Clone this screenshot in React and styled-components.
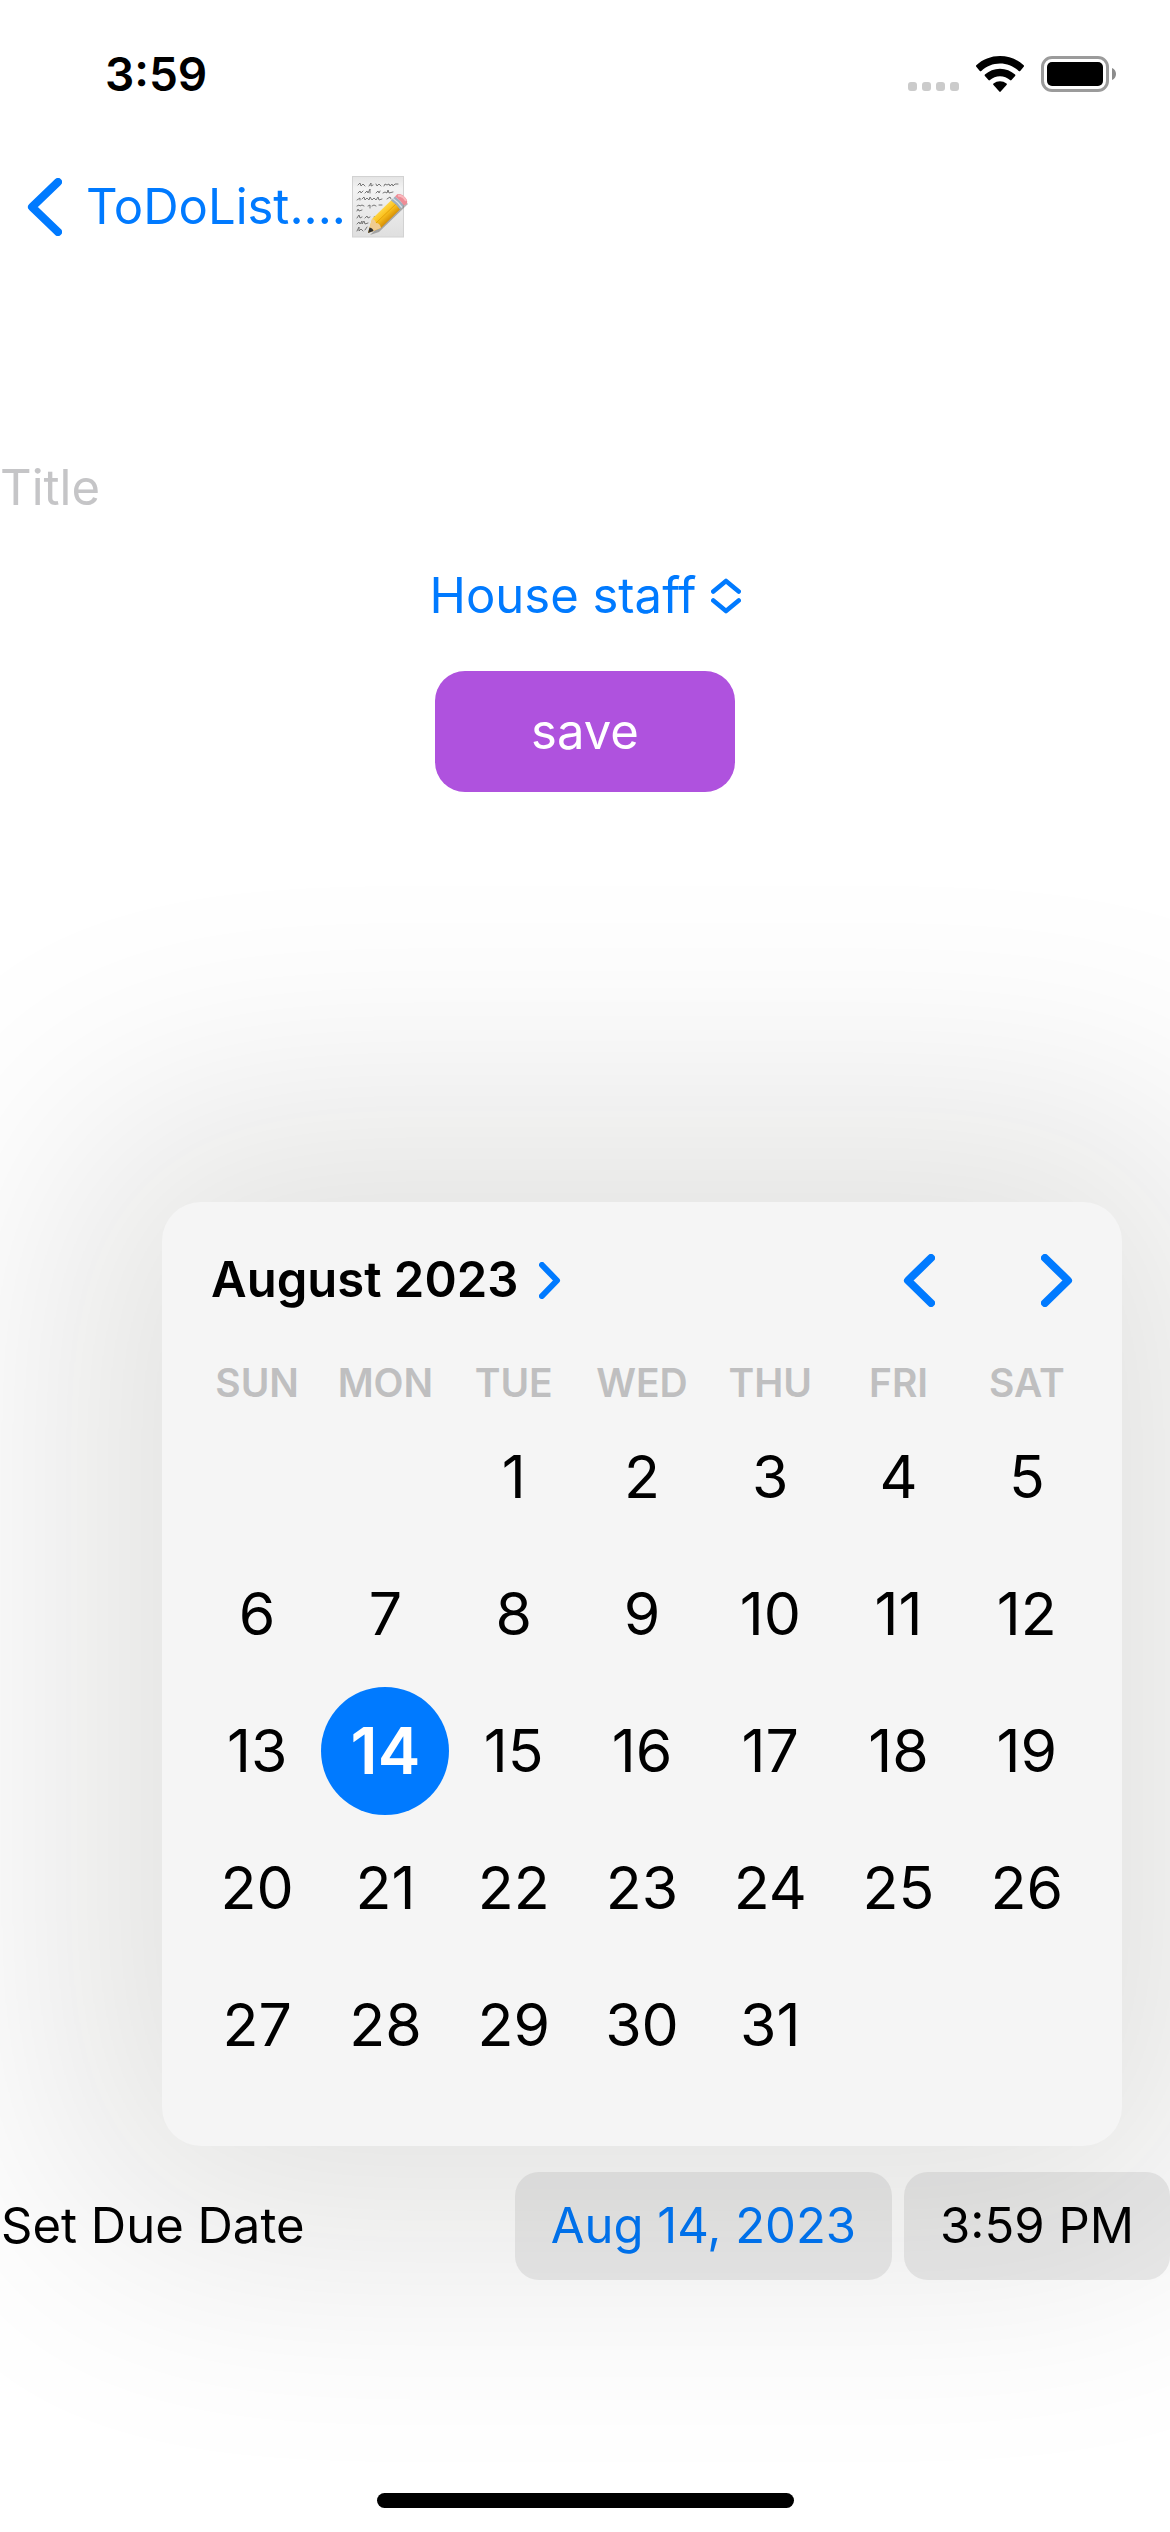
import React, { useState } from "react";
import styled, { createGlobalStyle, css } from "styled-components";

const BLUE = "#007aff";

const GlobalStyle = createGlobalStyle`
  *, *::before, *::after { box-sizing: border-box; }
  body {
    margin: 0;
    background: #fff;
    color: #000;
    font-family: Inter, "Liberation Sans", sans-serif;
    font-size: 49px;
    line-height: 66px;
  }
  button, input, select {
    margin: 0;
    padding: 0;
    border: 0;
    background: none;
    color: inherit;
    font: inherit;
  }
  button, select { cursor: pointer; }
  svg { display: block; flex: none; }
`;

const Page = styled.div`
  display: flex;
  flex-direction: column;
  min-height: 100vh;
  overflow-x: clip;
`;

const StatusBar = styled.header`
  display: flex;
  align-items: center;
  justify-content: space-between;
  height: 141px;
  padding: 7px 54px 0 105px;
`;

const Clock = styled.time`
  font-size: 46px;
  font-weight: 600;
`;

const StatusIcons = styled.div`
  display: flex;
  align-items: center;
  gap: 17px;
`;

const NavBar = styled.nav`
  display: flex;
  align-items: center;
  height: 132px;
  padding: 0 27px;
`;

const BackLink = styled.a`
  display: flex;
  align-items: center;
  color: ${BLUE};
  text-decoration: none;
`;

const BackLabel = styled.span`
  margin: 0 6px 0 24px;
`;

const Form = styled.form`
  display: flex;
  flex-direction: column;
  align-items: center;
  gap: 42px;
  padding-top: 182px;
`;

const TitleInput = styled.input`
  width: 100%;
  height: 66px;
  outline: none;

  &::placeholder {
    color: #c5c5c7;
    opacity: 1;
  }
`;

const Picker = styled.label`
  display: flex;
  align-items: center;
  gap: 14px;
  height: 66px;
  color: ${BLUE};
`;

const PickerSelect = styled.select`
  appearance: none;
  outline: none;
`;

const SaveButton = styled.button`
  width: 300px;
  height: 121px;
  border-radius: 30px;
  background: #af52de;
  color: #fff;
`;

const Calendar = styled.section`
  margin: 410px 48px 0 162px;
  padding: 0 31px 53px;
  border-radius: 39px;
  background: #f5f5f5;
  box-shadow: 0 0 280px 90px rgba(16, 16, 0, 0.12);
`;

const CalendarHeader = styled.div`
  display: flex;
  align-items: center;
  justify-content: space-between;
  height: 156px;
  padding: 0 18px;
`;

const MonthButton = styled.button`
  display: flex;
  align-items: center;
  gap: 21px;
  font-weight: 600;
`;

const MonthArrows = styled.div`
  display: flex;
  gap: 106px;
`;

const ArrowButton = styled.button`
  display: block;
`;

const MonthTable = styled.table`
  width: 100%;
  table-layout: fixed;
  border-collapse: collapse;
`;

const Weekday = styled.th`
  height: 50px;
  padding: 0;
  color: #bfbfc0;
  font-size: 39px;
  font-weight: 600;
  line-height: 50px;
`;

const DayCell = styled.td`
  height: 137px;
  padding: 0;
`;

const DayButton = styled.button`
  display: block;
  width: 128px;
  height: 128px;
  margin: 0 auto;
  border-radius: 50%;
  font-size: 59px;

  ${({ $selected }) =>
    $selected &&
    css`
      background: ${BLUE};
      color: #fff;
      font-size: 64px;
      font-weight: 600;
    `}
`;

const DueRow = styled.div`
  display: flex;
  align-items: center;
  justify-content: space-between;
  margin-top: 26px;
`;

const DueLabel = styled.span`
  padding-left: 1px;
`;

const DueValues = styled.div`
  display: flex;
  gap: 12px;
`;

const Pill = styled.button`
  height: 108px;
  padding: 0 36px;
  border-radius: 24px;
  background: rgba(118, 118, 122, 0.15);
  color: ${({ $active }) => ($active ? "#0070e9" : "#000")};
  white-space: nowrap;
`;

const HomeIndicator = styled.div`
  width: 417px;
  height: 15px;
  margin: auto auto 24px;
  border-radius: 8px;
  background: #000;
`;

function Chevron({ width, height, stroke, left }) {
  const inset = stroke / 2;
  const near = left ? width - inset : inset;
  const tip = left ? inset + 1 : width - inset - 1;
  return (
    <svg width={width} height={height} aria-hidden="true">
      <path
        d={`M${near} ${inset}L${tip} ${height / 2}L${near} ${height - inset}`}
        fill="none"
        stroke={BLUE}
        strokeWidth={stroke}
        strokeLinecap="round"
        strokeLinejoin="round"
      />
    </svg>
  );
}

function UpDownIcon() {
  return (
    <svg width="30" height="36" viewBox="0 0 30 36" aria-hidden="true">
      <path
        d="M2.300 13.500L15 3L27.700 13.500M2.300 22.500L15 33L27.700 22.500"
        fill="none"
        stroke={BLUE}
        strokeWidth="4.600"
        strokeLinecap="round"
        strokeLinejoin="round"
      />
    </svg>
  );
}

function SignalIcon() {
  return (
    <svg width="51" height="36" viewBox="0 0 51 36" aria-hidden="true">
      {[0, 14, 28, 42].map((x) => (
        <rect key={x} x={x} y="26" width="9" height="9" rx="3" fill="#cbcbcb" />
      ))}
    </svg>
  );
}

function WifiIcon() {
  return (
    <svg width="48" height="36" viewBox="0 0 48 36" aria-hidden="true">
      <path d="M24 0C33 0 41.500 3.400 47.700 9.300Q48.400 10 47.700 10.800L44.200 14.900Q43.500 15.600 42.700 14.900C37.600 10.200 31 7.500 24 7.500S10.400 10.200 5.300 14.900Q4.500 15.600 3.800 14.900L.3 10.800Q-.4 10 .3 9.300C6.500 3.400 15 0 24 0Z" />
      <path d="M24 12.700C29.800 12.700 35.100 14.900 39.100 18.600Q39.800 19.300 39.100 20.100L35.500 24.100Q34.800 24.800 34 24.100C31.300 21.700 27.800 20.200 24 20.200S16.700 21.700 14 24.100Q13.200 24.800 12.500 24.100L8.900 20.100Q8.200 19.300 8.900 18.600C12.900 14.900 18.200 12.700 24 12.700Z" />
      <path d="M24 25.200Q27.600 25.200 30.500 27.500Q31.200 28.200 30.500 29L24.700 35.600Q24 36.200 23.300 35.600L17.500 29Q16.800 28.200 17.500 27.500Q20.400 25.200 24 25.200Z" />
    </svg>
  );
}

function BatteryIcon() {
  return (
    <svg width="75" height="36" viewBox="0 0 75 36" aria-hidden="true">
      <rect x="1.500" y="1.500" width="65" height="33" rx="9.500" fill="none" stroke="#9b9b9b" strokeWidth="3" />
      <rect x="6" y="6" width="56" height="24" rx="5" />
      <path d="M71 12C73.800 13.200 75 15.400 75 18S73.800 22.800 71 24Z" fill="#8c8c8c" />
    </svg>
  );
}

function MemoIcon() {
  return (
    <svg width="58" height="62" viewBox="0 0 58 62" aria-hidden="true">
      <defs>
        <linearGradient id="paper" x1="0" y1="0" x2="0" y2="1">
          <stop offset="0" stopColor="#e4e4e4" />
          <stop offset=".2" stopColor="#f3f3f3" />
          <stop offset="1" stopColor="#dfdfdf" />
        </linearGradient>
        <linearGradient id="pencil" x1="30" y1="31" x2="40" y2="42" gradientUnits="userSpaceOnUse">
          <stop offset="0" stopColor="#ffdb4f" />
          <stop offset=".5" stopColor="#fbc11d" />
          <stop offset="1" stopColor="#d48d05" />
        </linearGradient>
      </defs>
      <rect x=".5" y=".5" width="51" height="60.500" fill="url(#paper)" stroke="#d2d2d2" />
      <g fill="none" stroke="#6a6a6a" strokeWidth=".9" strokeLinecap="round">
        <path d="M6 9l2-2 1 3 2-2 2 2M17 10l2-3 0 3 2-1M24 8l1 2 2-2 2 2M32 10l1-2 2 1 2-1 1 2 2-2 1 2 2-2 3 0" />
        <path d="M6 17l2-2 1 2 2-2M13 17l2-2 1 2 2-4 0 4M24 17l2-2 1 2 1-2M31 17l2-1 2 1 1-3 1 3 4-1" />
        <path d="M5 24l3-2 0 2M10 23l2-2 1 3 2-2 2 2 1-3 2 3 2-2 2 2 2-3 1 3 3-1M35 23l3-2 1 2" />
        <path d="M5 30l2-1 1 1 2-1 2 1M16 30l2-1 0 3M20 30l2-1 2 1M27 29l3 0" />
        <path d="M5 35l1-2 1 2 3-1" />
        <path d="M5 42l2-3 1 3 2-1M13 42l2-2 1 2 2-1M22 41l3-1" />
        <path d="M5 48l2-2 1 2 2-3 0 3 2-3 1 3 3-1" />
        <path d="M5 55l2-4 0 4 2-2 2 2M13 54l2-3" />
      </g>
      <path d="M18 59L27 56L56 28L53 25Z" fill="#000" opacity=".28" />
      <path d="M16 57L20 43L40 23.500L49 32.500L29 52Z" fill="url(#pencil)" />
      <path d="M16 57L20 43Q23 43 24 47Q28 47 29 52Z" fill="#f0cb91" />
      <path d="M16 57L17.500 51.500Q21 52 21.500 55Z" fill="#303030" />
      <path d="M24 47L45 27" stroke="#e4a20b" strokeWidth="1" />
      <path d="M39 24.500L43 20.500Q48 24 52 29L48 33.500Q44 28 39 24.500Z" fill="#9dafbd" />
      <path d="M41 22.500Q46 26 50 31.500" fill="none" stroke="#d6e0e7" strokeWidth="1.300" />
      <path d="M43 20.500L45 18.500C49 16 58 24 54.500 28L52 29.500Q48 24 43 20.500Z" fill="#ee8c96" />
      <path d="M46 19.500Q52 20 54 25" fill="none" stroke="#f9b8bd" strokeWidth="2" />
    </svg>
  );
}

const WEEKDAYS = ["SUN", "MON", "TUE", "WED", "THU", "FRI", "SAT"];
const FIRST_WEEKDAY = 2;
const DAYS_IN_MONTH = 31;
const WEEKS = Array.from({ length: 5 }, (_, week) =>
  Array.from({ length: 7 }, (_, column) => {
    const day = week * 7 + column - FIRST_WEEKDAY + 1;
    return day >= 1 && day <= DAYS_IN_MONTH ? day : null;
  })
);

export default function App() {
  const [title, setTitle] = useState("");
  const [selected, setSelected] = useState(14);

  return (
    <>
      <GlobalStyle />
      <Page>
        <StatusBar>
          <Clock>3:59</Clock>
          <StatusIcons>
            <SignalIcon />
            <WifiIcon />
            <BatteryIcon />
          </StatusIcons>
        </StatusBar>
        <NavBar>
          <BackLink href="#">
            <Chevron width={35} height={58} stroke={8} left />
            <BackLabel>ToDoList....</BackLabel>
            <MemoIcon />
          </BackLink>
        </NavBar>
        <Form onSubmit={(event) => event.preventDefault()}>
          <TitleInput
            aria-label="Title"
            placeholder="Title"
            value={title}
            onChange={(event) => setTitle(event.target.value)}
          />
          <Picker>
            <PickerSelect aria-label="Category" defaultValue="House staff">
              <option>House staff</option>
            </PickerSelect>
            <UpDownIcon />
          </Picker>
          <SaveButton type="submit">save</SaveButton>
        </Form>
        <Calendar aria-label="Due date calendar">
          <CalendarHeader>
            <MonthButton type="button">
              August 2023
              <Chevron width={22} height={37} stroke={6} />
            </MonthButton>
            <MonthArrows>
              <ArrowButton type="button" aria-label="Previous month">
                <Chevron width={32} height={53} stroke={8} left />
              </ArrowButton>
              <ArrowButton type="button" aria-label="Next month">
                <Chevron width={32} height={53} stroke={8} />
              </ArrowButton>
            </MonthArrows>
          </CalendarHeader>
          <MonthTable>
            <thead>
              <tr>
                {WEEKDAYS.map((name) => (
                  <Weekday key={name} scope="col">{name}</Weekday>
                ))}
              </tr>
            </thead>
            <tbody>
              {WEEKS.map((week, row) => (
                <tr key={row}>
                  {week.map((day, column) => (
                    <DayCell key={column}>
                      {day && (
                        <DayButton
                          type="button"
                          $selected={day === selected}
                          aria-pressed={day === selected}
                          onClick={() => setSelected(day)}
                        >
                          {day}
                        </DayButton>
                      )}
                    </DayCell>
                  ))}
                </tr>
              ))}
            </tbody>
          </MonthTable>
        </Calendar>
        <DueRow>
          <DueLabel>Set Due Date</DueLabel>
          <DueValues>
            <Pill type="button" $active>Aug {selected}, 2023</Pill>
            <Pill type="button">3:59 PM</Pill>
          </DueValues>
        </DueRow>
        <HomeIndicator />
      </Page>
    </>
  );
}
